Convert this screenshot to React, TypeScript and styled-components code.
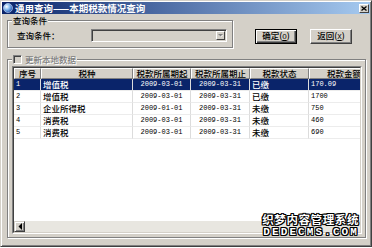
import React from "react";
import styled, { createGlobalStyle } from "styled-components";

const CJK = `"Noto Sans CJK SC", "Liberation Sans", sans-serif`;
const MONO = `"Liberation Mono", "DejaVu Sans Mono", monospace`;

const GlobalStyle = createGlobalStyle`
  html, body {
    margin: 0;
    padding: 0;
    background: #ffffff;
  }
  body {
    font-family: ${CJK};
  }
`;

interface TaxRow {
  no: string;
  kind: string;
  start: string;
  end: string;
  status: string;
  amount: string;
}

const rows: TaxRow[] = [
  { no: "1", kind: "增值税", start: "2009-03-01", end: "2009-03-31", status: "已缴", amount: "170.09" },
  { no: "2", kind: "增值税", start: "2009-03-01", end: "2009-03-31", status: "已缴", amount: "1700" },
  { no: "3", kind: "企业所得税", start: "2009-01-01", end: "2009-03-31", status: "未缴", amount: "750" },
  { no: "4", kind: "消费税", start: "2009-03-01", end: "2009-03-31", status: "未缴", amount: "460" },
  { no: "5", kind: "消费税", start: "2009-03-01", end: "2009-03-31", status: "未缴", amount: "690" },
];

const COLUMNS = "27px 92px 58px 59px 59px 70px";

const Window = styled.div`
  position: relative;
  box-sizing: border-box;
  width: 372px;
  height: 247px;
  display: flex;
  flex-direction: column;
  padding: 1px;
  background: #d4d0c8;
  border: 1px solid;
  border-color: #d4d0c8 #404040 #404040 #d4d0c8;
  box-shadow: inset 1px 1px 0 #ffffff, inset -1px -1px 0 #808080;
  overflow: hidden;
`;

const TitleBar = styled.div`
  height: 12px;
  display: flex;
  align-items: center;
  gap: 2px;
  padding: 0 1px;
  background: linear-gradient(to right, #0a246a, #a6caf0);
`;

const TitleText = styled.span`
  flex: 1;
  color: #ffffff;
  font: bold 9.5px/12px ${CJK};
  white-space: nowrap;
`;

const CloseButton = styled.div`
  box-sizing: border-box;
  width: 10px;
  height: 9px;
  display: flex;
  align-items: center;
  justify-content: center;
  background: #d4d0c8;
  border: 1px solid;
  border-color: #ffffff #404040 #404040 #ffffff;
`;

const Content = styled.div`
  flex: 1;
  min-height: 0;
  display: flex;
  flex-direction: column;
  padding: 1px 4px 7px 5px;
`;

const TopRow = styled.div`
  display: flex;
  align-items: flex-start;
`;

const GroupBox = styled.fieldset<{ $grow?: boolean }>`
  box-sizing: border-box;
  min-width: 0;
  margin: 0;
  padding: 0;
  border: 1px solid #808080;
  box-shadow: 1px 1px 0 #ffffff, inset 1px 1px 0 #ffffff;
  ${(p) => (p.$grow ? "flex: 1; min-height: 0; display: flex; flex-direction: column;" : "")}
`;

const Legend = styled.legend`
  display: flex;
  align-items: center;
  gap: 3px;
  height: 10px;
  margin-left: 4px;
  padding: 0 1px;
  background: #d4d0c8;
  font: 500 8.5px/10px ${CJK};
  color: #000000;
`;

const QueryGroup = styled(GroupBox)`
  width: 226px;
  padding: 4px 0 5px;
`;

const QueryLine = styled.div`
  display: flex;
  align-items: center;
  padding: 0 5px 0 9px;
`;

const FieldLabel = styled.span`
  flex: 0 0 74px;
  font: 500 8.5px/13px ${CJK};
  color: #000000;
`;

const Combo = styled.div`
  box-sizing: border-box;
  width: 136px;
  height: 13px;
  display: flex;
  justify-content: flex-end;
  align-items: center;
  padding-right: 1px;
  background: #d4d0c8;
  border: 1px solid;
  border-color: #808080 #ffffff #ffffff #808080;
  box-shadow: inset 1px 1px 0 #404040, inset -1px -1px 0 #d4d0c8;
`;

const ComboArrow = styled.div`
  box-sizing: border-box;
  width: 9px;
  height: 9px;
  display: flex;
  align-items: center;
  justify-content: center;
  background: #d4d0c8;
  border: 1px solid;
  border-color: #ffffff #404040 #404040 #ffffff;
`;

const ButtonGroup = styled.div`
  display: flex;
  gap: 13px;
  margin: 14px 0 0 22px;
`;

const DialogButton = styled.button<{ $default?: boolean }>`
  box-sizing: border-box;
  width: 42px;
  height: 15px;
  margin: 0;
  padding: 0;
  background: #d4d0c8;
  color: #000000;
  font: 500 8.5px/1 ${CJK};
  border: 1px solid;
  border-color: ${(p) => (p.$default ? "#000000" : "#ffffff #404040 #404040 #ffffff")};
  box-shadow: ${(p) =>
    p.$default
      ? "inset 1px 1px 0 #ffffff, inset -1px -1px 0 #404040, inset -2px -2px 0 #808080"
      : "inset -1px -1px 0 #808080"};

  u {
    font-family: ${MONO};
    font-size: 7.5px;
  }
`;

const DataGroup = styled(GroupBox)`
  margin-top: 6px;
  padding: 2px 0 3px;
`;

const CheckBox = styled.span`
  box-sizing: border-box;
  width: 9px;
  height: 9px;
  background: #d4d0c8;
  border: 1px solid;
  border-color: #808080 #ffffff #ffffff #808080;
  box-shadow: inset 1px 1px 0 #404040;
`;

const DisabledText = styled.span`
  color: #808080;
  text-shadow: 1px 1px 0 #ffffff;
`;

const TableFrame = styled.div`
  flex: 1;
  min-height: 0;
  display: flex;
  margin: 0 3px 0 4px;
  border: 1px solid;
  border-color: #808080 #ffffff #ffffff #808080;
`;

const TableBody = styled.div`
  flex: 1;
  min-width: 0;
  display: flex;
  flex-direction: column;
  background: #ffffff;
  border: 1px solid;
  border-color: #404040 #d4d0c8 #d4d0c8 #404040;
  overflow: hidden;
`;

const HeaderRow = styled.div`
  display: grid;
  grid-template-columns: ${COLUMNS};
  height: 11px;
`;

const HeaderCell = styled.div`
  box-sizing: border-box;
  background: #d4d0c8;
  border: 1px solid;
  border-color: #ffffff #808080 #808080 #ffffff;
  font: 500 8.5px/9px ${CJK};
  color: #000000;
  text-align: center;
  white-space: nowrap;
  overflow: hidden;
`;

const DataRow = styled.div<{ $selected?: boolean }>`
  display: grid;
  grid-template-columns: ${COLUMNS};
  height: 12px;
  background: ${(p) => (p.$selected ? "#0a246a" : "#ffffff")};
  color: ${(p) => (p.$selected ? "#ffffff" : "#000000")};
`;

const DataCell = styled.div<{ $align?: "left" | "center"; $mono?: boolean }>`
  box-sizing: border-box;
  padding-left: ${(p) => (p.$align === "center" ? 0 : 2)}px;
  border-right: 1px solid #dcdcdc;
  border-bottom: 1px solid #ececec;
  text-align: ${(p) => p.$align ?? "left"};
  font: ${(p) => (p.$mono ? `7px/11px ${MONO}` : `500 8.5px/11px ${CJK}`)};
  white-space: nowrap;
  overflow: hidden;
`;

const Filler = styled.div`
  flex: 1;
`;

const ScrollBar = styled.div`
  display: flex;
  height: 11px;
  background: #e8e6e0;
`;

const ScrollButton = styled.div`
  box-sizing: border-box;
  width: 11px;
  height: 11px;
  display: flex;
  align-items: center;
  justify-content: center;
  background: #d4d0c8;
  border: 1px solid;
  border-color: #d4d0c8 #404040 #404040 #d4d0c8;
  box-shadow: inset 1px 1px 0 #ffffff, inset -1px -1px 0 #808080;
`;

const Watermark = styled.div`
  position: absolute;
  right: 12px;
  bottom: 8px;
  display: flex;
  flex-direction: column;
  align-items: flex-end;
  color: #ffffff;
  font-weight: bold;
  text-shadow: 1px 0 0 #000, -1px 0 0 #000, 0 1px 0 #000, 0 -1px 0 #000, 1px 1px 0 #000,
    -1px -1px 0 #000, 1px -1px 0 #000, -1px 1px 0 #000;
`;

const WatermarkTitle = styled.span`
  font: bold 11.5px/14px ${CJK};
  letter-spacing: 0.6px;
`;

const WatermarkSite = styled.span`
  font: bold 11px/12px ${MONO};
  letter-spacing: 2.1px;
`;

const GlobeIcon = () => (
  <svg width="10" height="10" viewBox="0 0 10 10">
    <defs>
      <radialGradient id="globe" cx="0.35" cy="0.35" r="0.7">
        <stop offset="0" stopColor="#ffffff" />
        <stop offset="0.45" stopColor="#8cc0f0" />
        <stop offset="1" stopColor="#1c4fb0" />
      </radialGradient>
    </defs>
    <circle cx="5" cy="5" r="4.5" fill="url(#globe)" stroke="#d8e8ff" strokeWidth="0.6" />
  </svg>
);

const CloseGlyph = () => (
  <svg width="6" height="5" viewBox="0 0 6 5">
    <path d="M0.5 0.5 L5.5 4.5 M5.5 0.5 L0.5 4.5" stroke="#000" strokeWidth="1.3" />
  </svg>
);

const DownArrow = () => (
  <svg width="5" height="3" viewBox="0 0 5 3">
    <path d="M1 1 H5 L3 3 Z" fill="#ffffff" />
    <path d="M0 0 H5 L2.5 2.5 Z" fill="#808080" />
  </svg>
);

const LeftArrow = () => (
  <svg width="4" height="7" viewBox="0 0 4 7">
    <path d="M4 0 V7 L0.5 3.5 Z" fill="#000" />
  </svg>
);

const App: React.FC = () => {
  return (
    <>
      <GlobalStyle />
      <Window>
        <TitleBar>
          <GlobeIcon />
          <TitleText>通用查询——本期税款情况查询</TitleText>
          <CloseButton>
            <CloseGlyph />
          </CloseButton>
        </TitleBar>

        <Content>
          <TopRow>
            <QueryGroup>
              <Legend>查询条件</Legend>
              <QueryLine>
                <FieldLabel>查询条件：</FieldLabel>
                <Combo>
                  <ComboArrow>
                    <DownArrow />
                  </ComboArrow>
                </Combo>
              </QueryLine>
            </QueryGroup>
            <ButtonGroup>
              <DialogButton $default>
                确定(<u>O</u>)
              </DialogButton>
              <DialogButton>
                返回(<u>X</u>)
              </DialogButton>
            </ButtonGroup>
          </TopRow>

          <DataGroup $grow>
            <Legend>
              <CheckBox />
              <DisabledText>更新本地数据</DisabledText>
            </Legend>
            <TableFrame>
              <TableBody>
                <HeaderRow>
                  <HeaderCell>序号</HeaderCell>
                  <HeaderCell>税种</HeaderCell>
                  <HeaderCell>税款所属期起</HeaderCell>
                  <HeaderCell>税款所属期止</HeaderCell>
                  <HeaderCell>税款状态</HeaderCell>
                  <HeaderCell>税款金额</HeaderCell>
                </HeaderRow>
                {rows.map((row, i) => (
                  <DataRow key={row.no} $selected={i === 0}>
                    <DataCell $mono>{row.no}</DataCell>
                    <DataCell>{row.kind}</DataCell>
                    <DataCell $align="center" $mono>
                      {row.start}
                    </DataCell>
                    <DataCell $align="center" $mono>
                      {row.end}
                    </DataCell>
                    <DataCell>{row.status}</DataCell>
                    <DataCell $mono>{row.amount}</DataCell>
                  </DataRow>
                ))}
                <Filler />
                <ScrollBar>
                  <ScrollButton>
                    <LeftArrow />
                  </ScrollButton>
                </ScrollBar>
              </TableBody>
            </TableFrame>
          </DataGroup>
        </Content>

        <Watermark>
          <WatermarkTitle>织梦内容管理系统</WatermarkTitle>
          <WatermarkSite>DEDECMS.COM</WatermarkSite>
        </Watermark>
      </Window>
    </>
  );
};

export default App;
